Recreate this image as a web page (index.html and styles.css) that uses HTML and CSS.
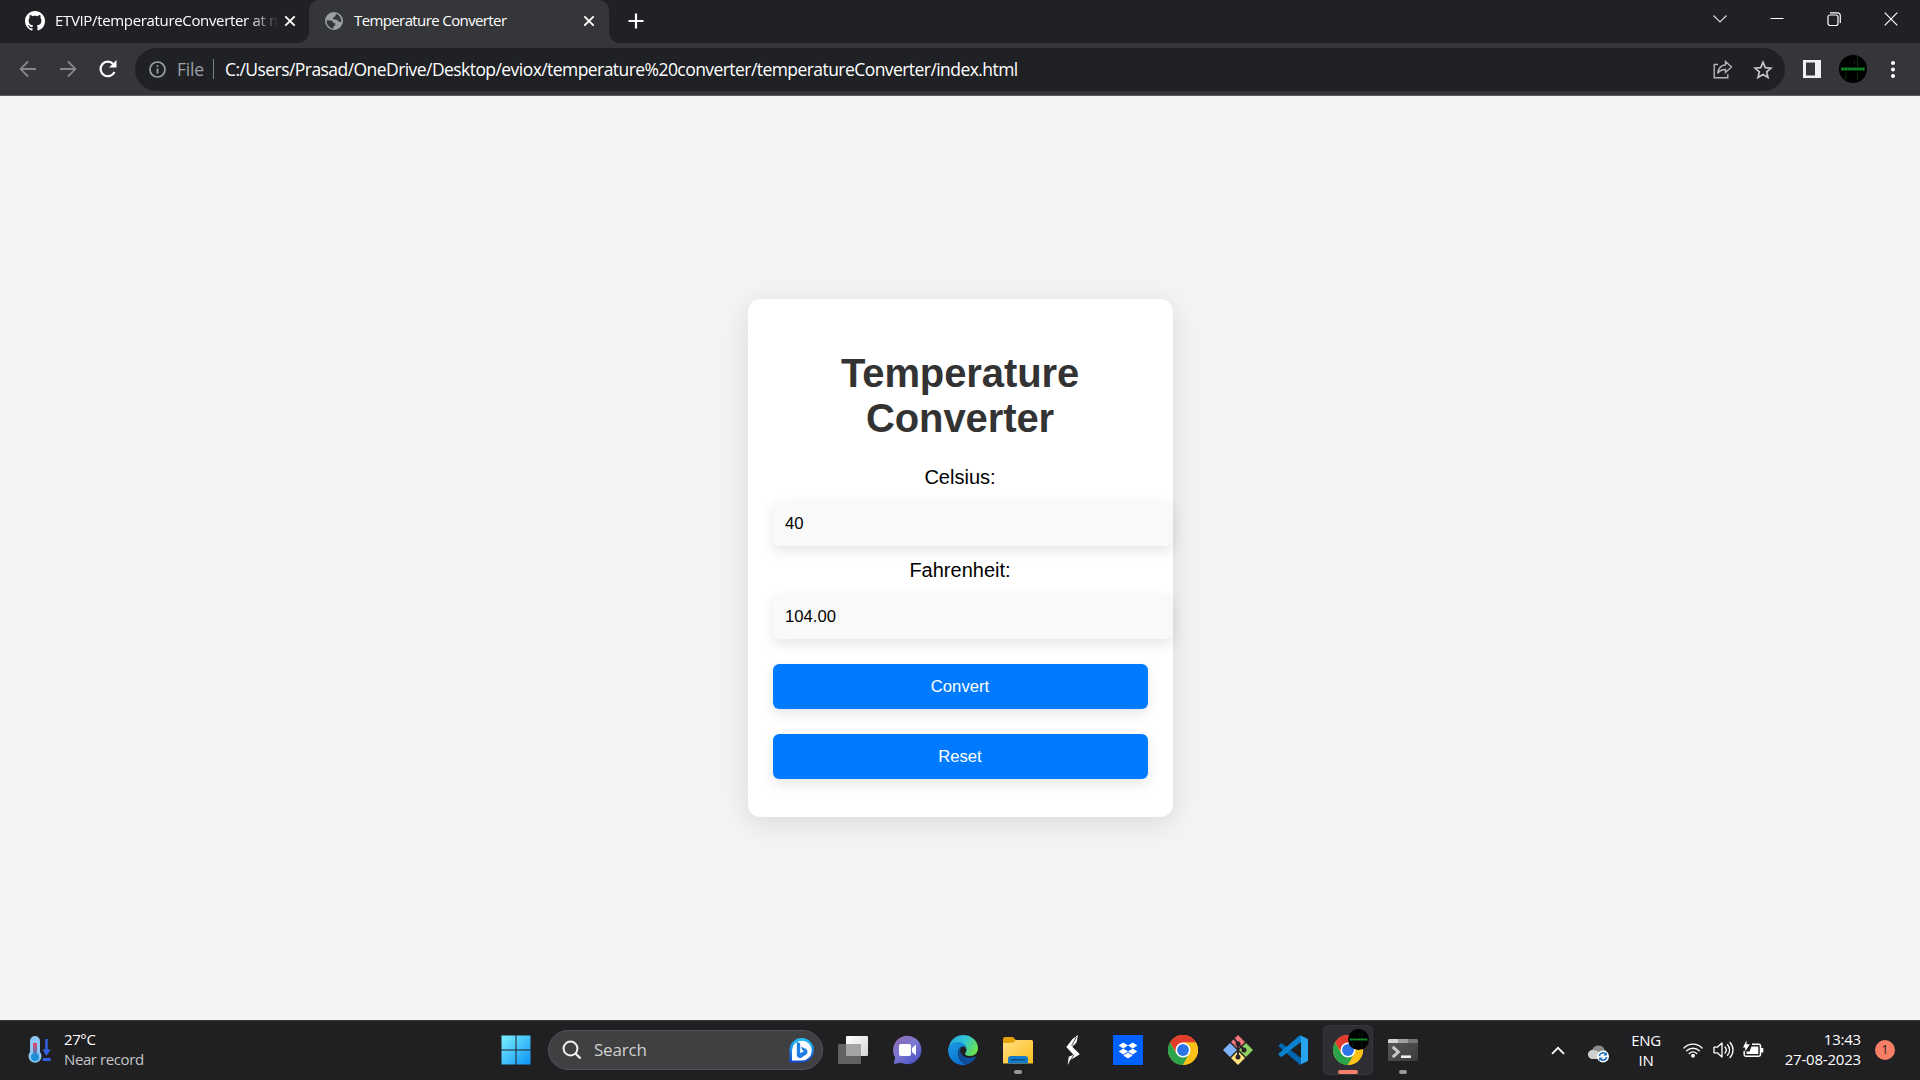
FILE: index.html
```html
<!DOCTYPE html>
<html lang="en">
<head>
<meta charset="utf-8">
<title>Temperature Converter</title>
<link rel="stylesheet" href="styles.css">
</head>
<body>
<svg class="defs" width="0" height="0">
  <defs>
    <linearGradient id="gWin" x1="0" y1="0" x2="1" y2="1"><stop offset="0" stop-color="#7df0ff"/><stop offset="1" stop-color="#0a94f5"/></linearGradient>
    <linearGradient id="gBing" x1="0" y1="0" x2="0" y2="1"><stop offset="0" stop-color="#22c4f4"/><stop offset="1" stop-color="#1747cf"/></linearGradient>
    <linearGradient id="gWhite" x1="0" y1="0" x2="1" y2="1"><stop offset="0" stop-color="#fff"/><stop offset="1" stop-color="#d5d5d5"/></linearGradient>
    <linearGradient id="gChat" x1="0.1" y1="0.1" x2="0.8" y2="1"><stop offset="0" stop-color="#8d6bb5"/><stop offset="0.45" stop-color="#7a78d0"/><stop offset="1" stop-color="#4a50c8"/></linearGradient>
    <linearGradient id="gEdge1" x1="0" y1="0.2" x2="1" y2="0.6"><stop offset="0" stop-color="#2aa5dc"/><stop offset="0.5" stop-color="#32c5d2"/><stop offset="1" stop-color="#6be34a"/></linearGradient>
    <linearGradient id="gEdge2" x1="0" y1="0" x2="0.6" y2="1"><stop offset="0" stop-color="#1b9de2"/><stop offset="1" stop-color="#0a6fd0"/></linearGradient>
    <linearGradient id="gFold" x1="0" y1="0" x2="1" y2="1"><stop offset="0" stop-color="#ffe083"/><stop offset="1" stop-color="#fcbc1c"/></linearGradient>
    <linearGradient id="gTerm" x1="0" y1="0" x2="1" y2="1"><stop offset="0" stop-color="#595959"/><stop offset="1" stop-color="#3c3c3c"/></linearGradient>
    <linearGradient id="gTherm" x1="0" y1="0" x2="0" y2="1"><stop offset="0" stop-color="#f0405f"/><stop offset="1" stop-color="#1c8fd6"/></linearGradient>
    <symbol id="chrome" viewBox="0 0 30 30">
      <circle cx="15" cy="15" r="15" fill="#fbc116"/>
      <path d="M15 15 8.9 18.5 2 7.5A15 15 0 0 1 28 7.5H15z" fill="#e33b2e"/>
      <path d="M2 7.5A15 15 0 0 0 15 30L21.1 18.5 15 15 8.5 18.7z" fill="#2ba24c"/>
      <path d="M15 7.5H28A15 15 0 0 1 15 30L21.5 18.7z" fill="#fbc116"/>
      <circle cx="15" cy="15" r="7.5" fill="#fff"/><circle cx="15" cy="15" r="5.9" fill="#2b74e8"/>
    </symbol>
    <symbol id="matrix" viewBox="0 0 28 28">
      <circle cx="14" cy="14" r="14" fill="#000"/>
      <path d="M18.5 1.5v3M18.5 6v6M15.5 6v3M7 17v6M6 22v3M18.5 17v8" stroke="#07300f" stroke-width="1"/>
      <path d="M2 14h24" stroke="#064d14" stroke-width="3.6"/>
      <path d="M3 14h22" stroke="#1a9c32" stroke-width="1.6" stroke-dasharray="2.2 .7"/>
    </symbol>
  </defs>
</svg>

<header class="browser">
  <div class="tabs">
    <div class="tab">
      <svg class="favicon" width="20" height="20" viewBox="0 0 16 16" fill="#fff"><path d="M8 0C3.58 0 0 3.58 0 8c0 3.54 2.29 6.53 5.47 7.59.4.07.55-.17.55-.38 0-.19-.01-.82-.01-1.49-2.01.37-2.53-.49-2.69-.94-.09-.23-.48-.94-.82-1.13-.28-.15-.68-.52-.01-.53.63-.01 1.08.58 1.23.82.72 1.21 1.87.87 2.33.66.07-.52.28-.87.51-1.07-1.78-.2-3.64-.89-3.64-3.95 0-.87.31-1.59.82-2.15-.08-.2-.36-1.02.08-2.12 0 0 .67-.21 2.2.82.64-.18 1.32-.27 2-.27s1.36.09 2 .27c1.53-1.04 2.2-.82 2.2-.82.44 1.1.16 1.92.08 2.12.51.56.82 1.27.82 2.15 0 3.07-1.87 3.75-3.65 3.95.29.25.54.73.54 1.48 0 1.07-.01 1.93-.01 2.2 0 .21.15.46.55.38A8.01 8.01 0 0 0 16 8c0-4.42-3.58-8-8-8z"/></svg>
      <span class="tab-title">ETVIP/temperatureConverter at n</span>
      <svg class="close" width="12" height="12" viewBox="0 0 12 12"><path d="M1.3 1.3l9.4 9.4M10.7 1.3l-9.4 9.4" stroke="#fff" stroke-width="1.9"/></svg>
    </div>
    <div class="tab active">
      <svg class="favicon" width="20" height="20" viewBox="0 0 20 20"><circle cx="10" cy="10" r="9" fill="#9aa0a6"/><path d="M2.600 9.200L6.500 9.600c1.800 0 2.500 1 2.500 2.200l2.200.4v2l-1.800 1.500v1.800C5.500 17 2.300 13.500 2.600 9.200z" fill="#35363a"/><path d="M11.800 2.700l-.2 2.200-2.500 1.600.2 2h3.200l1.700 1.800 3.100.9c.2-3.900-1.500-7.200-5.500-8.500z" fill="#35363a"/></svg>
      <span class="tab-title">Temperature Converter</span>
      <svg class="close" width="12" height="12" viewBox="0 0 12 12"><path d="M1.300 1.300l9.400 9.400M10.700 1.300l-9.400 9.400" stroke="#fff" stroke-width="1.900"/></svg>
    </div>
    <svg class="new-tab" width="16" height="16" viewBox="0 0 16 16"><path d="M8 .5v15M.5 8h15" stroke="#fff" stroke-width="2.200"/></svg>
    <div class="window-controls">
      <svg width="14" height="14" viewBox="0 0 14 14"><path d="M.5 3.500l6.500 6.500 6.500-6.500" fill="none" stroke="#d8d8d8" stroke-width="1.200"/></svg>
      <svg width="14" height="14" viewBox="0 0 14 14"><path d="M.5 6.500h13" stroke="#fff"/></svg>
      <svg width="14" height="14" viewBox="0 0 14 14"><rect x="1" y="3" width="10" height="10.500" rx="2" fill="none" stroke="#fff" stroke-width="1.200"/><path d="M3 .8h7.500a2.800 2.800 0 0 1 2.800 2.800v7.500" fill="none" stroke="#fff" stroke-width="1.200"/></svg>
      <svg width="14" height="14" viewBox="0 0 14 14"><path d="M.7.7l12.600 12.600M13.300.7L.7 13.300" stroke="#fff" stroke-width="1.200"/></svg>
    </div>
  </div>
  <div class="toolbar">
    <div class="nav">
      <svg width="18" height="18" viewBox="0 0 18 18"><path d="M17 9H2M9 1.500L1.500 9l7.500 7.500" fill="none" stroke="#85868a" stroke-width="1.800"/></svg>
      <svg width="18" height="18" viewBox="0 0 18 18"><path d="M1 9h15M9 1.500L16.500 9 9 16.500" fill="none" stroke="#85868a" stroke-width="1.800"/></svg>
      <svg width="20" height="20" viewBox="0 0 20 20"><path d="M16.500 13A7.300 7.300 0 1 1 15.200 4.900" fill="none" stroke="#fff" stroke-width="2.200"/><path d="M18.500 1v7.500H11z" fill="#fff"/></svg>
    </div>
    <div class="omnibox">
      <svg width="17" height="17" viewBox="0 0 17 17"><circle cx="8.500" cy="8.500" r="7.500" fill="none" stroke="#9aa0a6" stroke-width="1.700"/><path d="M8.500 7.500v5M8.500 4.300v1.700" stroke="#9aa0a6" stroke-width="1.800"/></svg>
      <span class="scheme">File</span>
      <span class="divider"></span>
      <span class="url">C:/Users/Prasad/OneDrive/Desktop/eviox/temperature%20converter/temperatureConverter/index.html</span>
      <svg class="share" width="20" height="19" viewBox="0 0 20 19"><path d="M5 4.500H1.200v13.300h13.600v-3.500" fill="none" stroke="#b5b6b8" stroke-width="1.400"/><path d="M12.500 1.500l6 5.500-6 5.500V9.500C9 9.500 6.500 10.500 4.700 13.500 5.300 8.500 8.300 5.300 12.500 4.800z" fill="none" stroke="#b5b6b8" stroke-width="1.400"/></svg>
      <svg width="20" height="20" viewBox="0 0 20 20"><path d="M10 2.200l2.300 5.400 5.800.5-4.400 3.800 1.300 5.700-5-3-5 3 1.300-5.700L1.900 8.100l5.800-.5z" fill="none" stroke="#c3c4c6" stroke-width="1.700"/></svg>
    </div>
    <svg class="panel" width="18" height="18" viewBox="0 0 18 18"><path fill-rule="evenodd" d="M0 0h18v18H0zM3 2.500v13h9v-13z" fill="#f1f1f3"/></svg>
    <svg class="avatar" width="28" height="28"><use href="#matrix"/></svg>
    <svg class="menu" width="4" height="17" viewBox="0 0 4 17" fill="#fff"><circle cx="2" cy="2" r="2"/><circle cx="2" cy="8.500" r="2"/><circle cx="2" cy="15" r="2"/></svg>
  </div>
</header>

<main class="page">
  <div class="card">
    <h1>Temperature Converter</h1>
    <label for="celsius">Celsius:</label>
    <input id="celsius" type="text" value="40">
    <label for="fahrenheit">Fahrenheit:</label>
    <input id="fahrenheit" type="text" value="104.00">
    <button type="button">Convert</button>
    <button type="button">Reset</button>
  </div>
</main>

<footer class="taskbar">
  <div class="weather">
    <svg width="24" height="30" viewBox="0 0 24 30"><path d="M7 1a5 5 0 0 1 5 5v11a6.500 6.500 0 1 1-10 0V6a5 5 0 0 1 5-5z" fill="#8fc6f5"/><circle cx="7" cy="22" r="4" fill="#1b8fd8"/><path d="M5 8h4v9L8.500 21h-3L5 17z" fill="url(#gTherm)"/><path d="M18.500 4v13" stroke="#3462e6" stroke-width="2.500"/><path d="M14.500 14.500h8l-4 6.500z" fill="#3462e6"/><path d="M16 24.500h5.500" stroke="#3462e6" stroke-width="3" stroke-linecap="round"/></svg>
    <div class="weather-text"><span>27°C</span><span class="dim">Near record</span></div>
  </div>
  <svg class="start" width="30" height="30" viewBox="0 0 30 30"><path d="M.5.500h14v14H.5zM15.500.500h14v14h-14zM.5 15.500h14v14H.5zM15.500 15.500h14v14h-14z" fill="url(#gWin)"/></svg>
  <div class="search">
    <svg width="20" height="20" viewBox="0 0 20 20"><circle cx="8.500" cy="8.500" r="6.900" fill="none" stroke="#f0f0f0" stroke-width="2"/><path d="M13.500 13.500l5 5" stroke="#f0f0f0" stroke-width="2.300"/></svg>
    <span>Search</span>
    <svg class="bing" width="25" height="25" viewBox="0 0 25 25"><path d="M.5 24.500V12A12.200 12.200 0 1 1 12.500 24.500z" fill="url(#gBing)"/><path d="M3 22.500V12.200A9.900 9.900 0 1 1 12.800 22.500z" fill="#fff"/><path d="M7.800 4l3.400 1.300v9.900l4-2.200-2-1-1.200-3.300 5.200 2.400c1.700 1.600 1.800 4.200 0 5.500l-5.500 3.400c-.5.300-1 .3-1.500 0l-2.400-1.700z" fill="#1d7ee6"/></svg>
  </div>
  <div class="apps">
    <div class="app"><svg width="30" height="30" viewBox="0 0 30 30"><rect x="0" y="9" width="23" height="20" rx="1" fill="#626262"/><rect x="8" y="1" width="22" height="20" rx="1" fill="url(#gWhite)"/><path d="M8 9h15v12H8z" fill="#a3a3a3"/></svg></div>
    <div class="app"><svg width="30" height="30" viewBox="0 0 30 30"><path d="M.8 29l1.400-6.500A14.200 14.200 0 1 1 8 27.700z" fill="url(#gChat)"/><rect x="6" y="9" width="12" height="12" rx="2" fill="#fff"/><path d="M19 13l4-3.500v11L19 17z" fill="#fff"/></svg></div>
    <div class="app"><svg width="30" height="30" viewBox="0 0 30 30"><path d="M1 11C3 4 8.500 0 15 0c9 0 15 6.500 15 13 0 5-3.500 8-8 8-3.500 0-5-1.300-5-2.300 0-.7 1.500-1.500 1.500-3.700 0-3.500-3.500-7-8.500-7-4 0-7 1.500-9 3z" fill="url(#gEdge1)"/><path d="M0 15C0 10 4.500 7 9.500 7c5.500 0 9 3.500 9 7.500 0-2-1.500-3-3.200-3-3 0-5.300 3-5.300 6.500C10 24 14 28 19 29.500A15 15 0 0 1 0 15z" fill="url(#gEdge2)"/><path d="M12.600 12.500C10 15 9.500 20 12 24c2.500 4 6 5.500 8 5 3-1 6-3.500 7.800-6.500.4-.7-.2-1-.8-.7-6 2.500-14 .7-14.800-6z" fill="#0d4f9d"/></svg></div>
    <div class="app"><svg width="30" height="30" viewBox="0 0 30 30"><path d="M0 4a2 2 0 0 1 2-2h8l3 3h11v6H0z" fill="#e3a008"/><path d="M0 8l10-.2L13 5h15.500A1.500 1.500 0 0 1 30 6.500V28.500H0z" fill="url(#gFold)"/><path d="M5 28.500V24a3 3 0 0 1 3-3h14a3 3 0 0 1 3 3v4.500z" fill="#157bc9"/><path d="M8 24.700h14" stroke="#0b4d88" stroke-width="1.400"/></svg><i class="dot"></i></div>
    <div class="app"><svg width="30" height="30" viewBox="0 0 30 30"><path d="M20 0l-1.500 7.500-4.200 4.200 7.500 7.500L12.500 25 9.700 30l1-8.300 4.800-2L8.300 12 14.500 4z" fill="#fff"/><path d="M18.300 2L13.600 11M15.800 20l-4.500 7.500" stroke="#211f25" stroke-width=".8"/></svg></div>
    <div class="app"><svg width="30" height="30" viewBox="0 0 30 30"><path d="M0 0h30v30H0z" fill="#0061ff"/><path d="M10.300 7.500l4.700 3-4.700 3-4.700-3zM19.700 7.500l4.700 3-4.700 3-4.700-3zM10.300 13.500l4.700 3-4.700 3-4.700-3zM19.700 13.500l4.700 3-4.700 3-4.700-3zM15 17.500l4.700 3-4.700 3-4.700-3z" fill="#fff"/></svg></div>
    <div class="app"><svg width="30" height="30"><use href="#chrome"/></svg></div>
    <div class="app"><svg width="30" height="30" viewBox="0 0 30 30"><path d="M15 0l7 7-7 7-7-7z" fill="#f4777d"/><path d="M7 8l7 7-7 7-7-7z" fill="#80b1fb"/><path d="M23 8l7 7-7 7-7-7z" fill="#8ed35f"/><path d="M15 16l7 7-7 7-7-7z" fill="#ffe07d"/><path d="M11 3.500l4 5V22M15 9l6.500 6" stroke="#2b2227" stroke-width="1.900" fill="none"/><circle cx="15" cy="8.800" r="2.500" fill="#2b2227"/><circle cx="21" cy="15" r="2.500" fill="#2b2227"/><circle cx="15" cy="22" r="2.500" fill="#2b2227"/></svg></div>
    <div class="app"><svg width="30" height="30" viewBox="0 0 30 30"><path d="M.6 10.300l2-1.900c.4-.4 1-.4 1.500 0L23 23v6.300L22 29.800.7 11.500c-.4-.4-.4-.8-.1-1.200z" fill="#0067b0"/><path d="M.6 19.700l2 1.900c.4.400 1 .400 1.500 0L23 7V.7L22 .2.700 18.500c-.4.400-.4.800-.1 1.200z" fill="#0a84d2"/><path d="M22 29.800c-.5 0 1-.3 1-1.500V1.700c0-1.200-1.500-1.500-1-1.500L29 3.500c.6.300 1 .9 1 1.600v19.800c0 .7-.4 1.300-1 1.600z" fill="#28a4ee"/></svg></div>
    <div class="app current"><svg width="30" height="30"><use href="#chrome"/></svg><svg class="profile" width="21" height="21"><use href="#matrix"/></svg><i class="dot wide"></i></div>
    <div class="app"><svg width="30" height="30" viewBox="0 0 30 30"><rect y="4" width="30" height="22" rx="1.500" fill="url(#gTerm)"/><path d="M0 8V5.500A1.500 1.500 0 0 1 1.500 4H10v4z" fill="#d4d4d4"/><path d="M10 4h10v4H10z" fill="#a0a0a0"/><path d="M20 4h8.500A1.500 1.500 0 0 1 30 5.500V8H20z" fill="#777"/><path d="M4.700 11.800l5.600 5.200-5.600 5.200" fill="none" stroke="#c8c8c8" stroke-width="3"/><path d="M13 21.700h10" stroke="#f0f0f0" stroke-width="2.600"/></svg><i class="dot"></i></div>
  </div>
  <div class="tray">
    <svg class="chev" width="14" height="9" viewBox="0 0 14 9"><path d="M1 7.800l6-6 6 6" fill="none" stroke="#fff" stroke-width="1.700"/></svg>
    <svg class="cloud" width="22" height="18" viewBox="0 0 22 18"><path d="M5 13.500A4.500 4.500 0 0 1 4.300 5 6.500 6.500 0 0 1 16.500 4.500 5 5 0 0 1 17 13.500z" fill="#8b8b8b"/><path d="M5 14A4.600 4.600 0 1 1 7 5.500c4 .5 6 4 9 8.500z" fill="#cfcfcf"/><circle cx="15" cy="11.500" r="6" fill="#fff"/><path d="M11.300 11a3.800 3.800 0 0 1 6.700-1.700M18.700 12a3.800 3.800 0 0 1-6.700 1.700" fill="none" stroke="#1469bf" stroke-width="1.500"/><path d="M18.800 7v3.500h-3.500zM11.200 16v-3.500h3.500z" fill="#1469bf"/></svg>
    <div class="lang"><span>ENG</span><span>IN</span></div>
    <svg class="wifi" width="20" height="16" viewBox="0 0 20 16"><g fill="none" stroke="#fff" stroke-width="1.400" stroke-linecap="round"><path d="M1 6a12.500 12.500 0 0 1 18 0M3.700 8.800a8.900 8.900 0 0 1 12.600 0M6.300 11.400a5.300 5.300 0 0 1 7.400 0"/></g><circle cx="10" cy="13.700" r="1.900" fill="#fff"/></svg>
    <svg class="volume" width="21" height="18" viewBox="0 0 21 18"><g fill="none" stroke="#fff" stroke-width="1.300" stroke-linejoin="round" stroke-linecap="round"><path d="M1 6.200h3.200L9 2v14l-4.800-4.200H1z"/><path d="M12 6a4.500 4.500 0 0 1 0 6M14.500 3.800a7.500 7.500 0 0 1 0 10.400M17 1.500a10.800 10.800 0 0 1 0 15"/></g></svg>
    <svg class="battery" width="21" height="18" viewBox="0 0 21 18"><path d="M9 4.200h6.800A1.700 1.700 0 0 1 17.500 6v8.500a1.700 1.700 0 0 1-1.700 1.700H3A1.700 1.700 0 0 1 1.200 14.500V11" fill="none" stroke="#fff" stroke-width="1.500"/><path d="M18 8h2.300v4.500H18z" fill="#fff"/><path d="M8.500 6.500h6.800v7.500H3.500v-2.500h3z" fill="#fff"/><path d="M3.500.200v4h3.300L2.200 11.500V7.500H0z" fill="#fff"/></svg>
    <div class="clock"><span>13:43</span><span>27-08-2023</span></div>
    <div class="badge">1</div>
  </div>
</footer>
</body>
</html>
```
FILE: styles.css
```css
* { box-sizing: border-box; }
body {
  margin: 0;
  width: 1920px;
  height: 1080px;
  overflow: hidden;
  display: flex;
  flex-direction: column;
  font-family: "Open Sans", "Noto Sans", sans-serif;
  background: #f4f4f4;
}
svg { display: block; flex: none; }
.defs { position: absolute; }

/* Browser window */
.browser { flex: none; height: 96px; background: #35363a; border-bottom: 1px solid #5b5c5f; color: #fff; }
.tabs { height: 43px; display: flex; align-items: center; background: #202124; }
.tab { width: 300px; height: 43px; display: flex; align-items: center; padding: 0 14px 2px 15px; }
.tab:first-child { width: 309px; padding-left: 25px; padding-right: 13px; }
.tab.active { position: relative; background: #35363a; border-radius: 10px 10px 0 0; }
.tab.active::before, .tab.active::after { content: ""; position: absolute; bottom: 0; width: 10px; height: 10px; }
.tab.active::before { left: -10px; background: radial-gradient(circle at 0 0, transparent 9.5px, #35363a 10px); }
.tab.active::after { right: -10px; background: radial-gradient(circle at 100% 0, transparent 9.5px, #35363a 10px); }
.tab-title { flex: 1; margin-left: 10px; padding-bottom: 2px; font-size: 15px; letter-spacing: -.61px; white-space: nowrap; }
.tab:first-child .tab-title { flex: none; width: 228px; margin-right: 1px; letter-spacing: -.34px; -webkit-mask-image: linear-gradient(90deg, #000 194px, transparent 224px); mask-image: linear-gradient(90deg, #000 194px, transparent 224px); }
.new-tab { margin: 0 0 1px 19px; }
.window-controls { margin-left: auto; display: flex; gap: 43px; padding: 0 22px 6px 0; }
.toolbar { height: 52px; display: flex; align-items: center; }
.nav { width: 135px; display: flex; align-items: center; gap: 21.500px; padding: 0 0 1px 19px; }
.omnibox { width: 1650px; height: 43px; margin-top: 1px; border-radius: 22px; background: #202124; display: flex; align-items: center; padding: 0 12px 0 14px; font-size: 17.500px; white-space: nowrap; }
.scheme { margin-left: 11px; padding-bottom: 2px; width: 36px; color: #9aa0a6; letter-spacing: -.2px; }
.divider { width: 1px; height: 20px; margin-bottom: 2px; background: #7d8186; margin-right: 11px; }
.url { padding-bottom: 2px; letter-spacing: -.56px; }
.share { margin: 0 20px 0 auto; }
.panel { margin-left: 18px; }
.avatar { margin-left: 18px; }
.menu { margin-left: 24px; }

/* Converter page */
.page { flex: 1; display: flex; align-items: center; justify-content: center; font-family: Arial, "Liberation Sans", sans-serif; }
.card { width: 425px; height: 518px; padding: 25px; border-radius: 12.500px; background: #fff; box-shadow: 0 6px 31px rgba(0, 0, 0, .11); display: flex; flex-direction: column; text-align: center; }
h1 { margin: 27px 0 25px; font-size: 40px; line-height: 45px; letter-spacing: -.1px; color: #333; }
label { height: 23px; margin-bottom: 12px; font-size: 20px; line-height: 23px; color: #000; }
input { flex: none; width: 400px; height: 45px; margin: 0 0 13px; padding: 0 12.500px; border: 0; border-radius: 6.250px; background: #f9f9f9; color: #000; font: 16.670px Arial, "Liberation Sans", sans-serif; box-shadow: 0 5px 12.500px rgba(0, 0, 0, .1); }
button { flex: none; height: 45px; margin: 12px 0 13px; padding: 0; border: 0; border-radius: 6.250px; background: #007bff; color: #fff; font: 16.670px Arial, "Liberation Sans", sans-serif; box-shadow: 0 5px 12.500px rgba(0, 0, 0, .1); }

/* Taskbar */
.taskbar { flex: none; height: 60px; display: flex; align-items: center; padding-bottom: 1px; background: #202023; border-top: 1px solid #3a3a3c; color: #fff; font-size: 15px; line-height: 20px; }
.weather { width: 501px; display: flex; align-items: center; padding-left: 28px; }
.weather-text { display: flex; flex-direction: column; margin: 0 0 2px 12px; letter-spacing: -.4px; }
.dim { color: #c6c6c6; }
.search { width: 275px; height: 40px; margin: 0 5px 0 17px; display: flex; align-items: center; padding: 0 8px 0 13px; border: 1px solid #555358; border-radius: 20px; background: #403f42; color: #d0d0d0; font-size: 17px; letter-spacing: -.2px; }
.search span { margin-left: 12px; padding-bottom: 1px; }
.bing { margin-left: auto; }
.apps { display: flex; gap: 5px; }
.app { position: relative; width: 50px; height: 50px; display: grid; place-items: center; border-radius: 5px; }
.current { background: #2f2e33; border: 1px solid #39383d; }
.profile { position: absolute; left: 24px; top: 3px; }
.dot { position: absolute; left: 50%; bottom: 1px; width: 8px; height: 4px; margin-left: -4px; border-radius: 2px; background: #98979a; }
.dot.wide { width: 20px; margin-left: -10px; bottom: 0; background: #f4806a; }
.tray { margin-left: auto; display: flex; align-items: center; padding-right: 25px; }
.cloud { margin: 7px 0 0 23px; }
.lang { width: 40px; margin-left: 16px; display: flex; flex-direction: column; align-items: center; padding-bottom: 1px; letter-spacing: -.3px; }
.wifi { margin-left: 17px; }
.volume { margin-left: 10px; }
.battery { margin: 0 0 2px 9px; }
.clock { width: 97px; display: flex; flex-direction: column; align-items: flex-end; padding-bottom: 2px; letter-spacing: -.2px; }
.badge { width: 20px; height: 20px; margin-left: 14px; border-radius: 50%; background: #f77f66; color: #202024; font-size: 12px; text-align: center; }
```
